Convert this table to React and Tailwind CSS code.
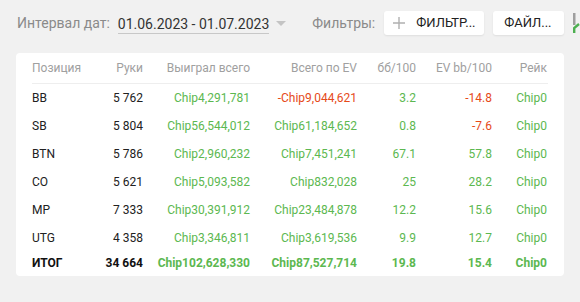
import React from 'react';

// ── Data ──────────────────────────────────────────────────────────────────────
const ROWS = [
  { pos: 'BB',  hands: '5 762', won: 'Chip4,291,781',  ev: '-Chip9,044,621', bb: '3.2',  evbb: '-14.8', rake: 'Chip0' },
  { pos: 'SB',  hands: '5 804', won: 'Chip56,544,012', ev: 'Chip61,184,652', bb: '0.8',  evbb: '-7.6',  rake: 'Chip0' },
  { pos: 'BTN', hands: '5 786', won: 'Chip2,960,232',  ev: 'Chip7,451,241',  bb: '67.1', evbb: '57.8',  rake: 'Chip0' },
  { pos: 'CO',  hands: '5 621', won: 'Chip5,093,582',  ev: 'Chip832,028',    bb: '25',   evbb: '28.2',  rake: 'Chip0' },
  { pos: 'MP',  hands: '7 333', won: 'Chip30,391,912', ev: 'Chip23,484,878', bb: '12.2', evbb: '15.6',  rake: 'Chip0' },
  { pos: 'UTG', hands: '4 358', won: 'Chip3,346,811',  ev: 'Chip3,619,536',  bb: '9.9',  evbb: '12.7',  rake: 'Chip0' },
];

const GRID = 'grid grid-cols-[60px_51px_107px_107px_59px_76px_55px] items-center';

const tone = v => (v.startsWith('-') ? 'text-[#e64a19]' : 'text-[#5cb850]');

function Row({ r }) {
  return (
    <div className={`${GRID} h-[28px] text-[12px]`}>
      <span className="text-[#212121]">{r.pos}</span>
      <span className="text-right text-[#212121]">{r.hands}</span>
      <span className={`text-right ${tone(r.won)}`}>{r.won}</span>
      <span className={`text-right ${tone(r.ev)}`}>{r.ev}</span>
      <span className={`text-right ${tone(r.bb)}`}>{r.bb}</span>
      <span className={`text-right ${tone(r.evbb)}`}>{r.evbb}</span>
      <span className="text-right text-[#5cb850]">{r.rake}</span>
    </div>
  );
}

export default function App() {
  return (
    <div className="w-[580px] h-[302px] bg-[#f1f1f1] overflow-hidden font-['Roboto',sans-serif]">

      {/* Top bar */}
      <div className="flex items-center h-[46px] pl-[17px] whitespace-nowrap">
        <span className="shrink-0 text-[14px] text-[#8a8a8a]">Интервал дат:</span>
        <span className="shrink-0 ml-[8px] text-[14px] text-[#333] border-b border-[#c8c8c8] leading-[18px] mt-[2px]">
          01.06.2023 - 01.07.2023
        </span>
        <svg className="shrink-0 ml-[7px] mt-[2px]" width="10" height="6" viewBox="0 0 10 6">
          <path d="M0 0h10L5 5z" fill="#c4c4c4" />
        </svg>
        <span className="shrink-0 ml-[26px] text-[14px] text-[#8a8a8a]">Фильтры:</span>
        <button className="shrink-0 ml-[9px] w-[100px] h-[24px] bg-white rounded-[3px] shadow-[0_1px_2px_rgba(0,0,0,0.08)] flex items-center pl-[9px] text-[13px] text-[#212121]">
          <svg width="12" height="12" viewBox="0 0 12 12" className="mr-[11px]">
            <path d="M6 0v12M0 6h12" stroke="#b0b0b0" strokeWidth="1.4" />
          </svg>
          ФИЛЬТР...
        </button>
        <button className="shrink-0 ml-[9px] w-[71px] h-[24px] bg-white rounded-[3px] shadow-[0_1px_2px_rgba(0,0,0,0.08)] text-[13px] text-[#212121] pl-[11px] text-left">
          ФАЙЛ...
        </button>
        <svg className="shrink-0 ml-[9px]" width="12" height="24" viewBox="0 0 12 24">
          <rect x="0" y="2" width="2.5" height="12" fill="#9e9e9e" />
          <path d="M1.2 22V17L6 13" stroke="#4caf50" strokeWidth="2.4" fill="none" />
        </svg>
      </div>

      {/* Table card */}
      <div className="mx-4 mt-[7px] bg-white rounded-[4px] px-4">
        <div className={`${GRID} h-[31px] text-[12px] text-[#a0a0a0] border-b border-[#eeeeee]`}>
          <span>Позиция</span>
          <span className="text-right">Руки</span>
          <span className="text-right">Выиграл всего</span>
          <span className="text-right">Всего по EV</span>
          <span className="text-right">бб/100</span>
          <span className="text-right">EV bb/100</span>
          <span className="text-right">Рейк</span>
        </div>

        {ROWS.map(r => <Row key={r.pos} r={r} />)}

        {/* Total */}
        <div className={`${GRID} h-[24px] text-[12px] font-bold pb-[2px]`}>
          <span className="text-[#111]">ИТОГ</span>
          <span className="text-right text-[#111]">34 664</span>
          <span className="text-right text-[#5cb850]">Chip102,628,330</span>
          <span className="text-right text-[#5cb850]">Chip87,527,714</span>
          <span className="text-right text-[#5cb850]">19.8</span>
          <span className="text-right text-[#5cb850]">15.4</span>
          <span className="text-right text-[#5cb850]">Chip0</span>
        </div>
      </div>
    </div>
  );
}
